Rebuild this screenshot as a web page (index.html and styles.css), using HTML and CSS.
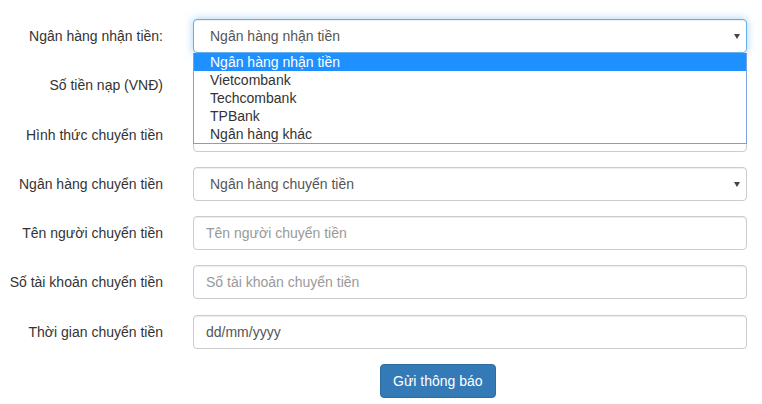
FILE: index.html
```html
<!DOCTYPE html>
<html lang="vi">
<head>
<meta charset="utf-8">
<title>Thông báo chuyển tiền</title>
<link rel="stylesheet" href="styles.css">
</head>
<body>
<form class="form">
  <div class="row">
    <label class="label">Ngân hàng nhận tiền:</label>
    <div class="control select-wrap open">
      <div class="field select focus">Ngân hàng nhận tiền</div>
      <ul class="dropdown">
        <li class="opt active">Ngân hàng nhận tiền</li>
        <li class="opt">Vietcombank</li>
        <li class="opt">Techcombank</li>
        <li class="opt">TPBank</li>
        <li class="opt">Ngân hàng khác</li>
      </ul>
    </div>
  </div>
  <div class="row">
    <label class="label">Số tiền nạp (VNĐ)</label>
    <div class="control"><input class="field" type="text"></div>
  </div>
  <div class="row">
    <label class="label">Hình thức chuyển tiền</label>
    <div class="control"><input class="field" type="text"></div>
  </div>
  <div class="row">
    <label class="label">Ngân hàng chuyển tiền</label>
    <div class="control select-wrap">
      <div class="field select">Ngân hàng chuyển tiền</div>
    </div>
  </div>
  <div class="row">
    <label class="label">Tên người chuyển tiền</label>
    <div class="control"><input class="field" type="text" placeholder="Tên người chuyển tiền"></div>
  </div>
  <div class="row">
    <label class="label">Số tài khoản chuyển tiền</label>
    <div class="control"><input class="field" type="text" placeholder="Số tài khoản chuyển tiền"></div>
  </div>
  <div class="row">
    <label class="label">Thời gian chuyển tiền</label>
    <div class="control"><input class="field date" type="text" value="dd/mm/yyyy"></div>
  </div>
  <div class="actions">
    <button class="btn" type="button">Gửi thông báo</button>
  </div>
</form>
</body>
</html>
```

FILE: styles.css
```css
* { box-sizing: border-box; }
body {
  margin: 0;
  background: #fff;
  font-family: "Liberation Sans", Arial, sans-serif;
  font-size: 14px;
  color: #333;
}
.form {
  display: flex;
  flex-direction: column;
  gap: 15.3px;
  padding-top: 19px;
}
.row {
  display: flex;
  align-items: center;
  height: 34px;
}
.label {
  width: 163px;
  text-align: right;
  color: #333;
  line-height: 20px;
}
.control {
  margin-left: 30px;
  width: 554px;
  height: 34px;
}
.field {
  display: block;
  width: 100%;
  height: 34px;
  padding: 6px 12px;
  font-family: inherit;
  font-size: 14px;
  line-height: 20px;
  color: #555;
  background: #fff;
  border: 1px solid #ccc;
  border-radius: 4px;
  box-shadow: inset 0 1px 1px rgba(0,0,0,.075);
  outline: none;
}
.field::placeholder { color: #999; }
.select {
  padding-left: 16px;
  position: relative;
}
.select-wrap { position: relative; }
.select-wrap::after {
  content: "";
  position: absolute;
  right: 7px;
  top: 15px;
  border-left: 3px solid transparent;
  border-right: 3px solid transparent;
  border-top: 5px solid #444;
}
.focus {
  border-color: #66afe9;
  box-shadow: inset 0 1px 1px rgba(0,0,0,.075), 0 0 8px rgba(102,175,233,.6);
}
.dropdown {
  position: absolute;
  left: 0;
  top: 34px;
  width: 554px;
  margin: 0;
  padding: 0;
  list-style: none;
  background: #fff;
  border: 1px solid #7a9ee0;
  border-top: none;
  z-index: 2;
}
.opt {
  height: 18px;
  line-height: 18px;
  padding-left: 16px;
  color: #333;
  font-size: 14px;
}
.opt.active {
  background: #1e90ff;
  color: #fff;
}
.date { color: #555; }
.actions {
  padding-left: 380px;
}
.btn {
  height: 34px;
  padding: 6px 12px;
  font-family: inherit;
  font-size: 14px;
  line-height: 20px;
  color: #fff;
  background: #337ab7;
  border: 1px solid #2e6da4;
  border-radius: 4px;
}
```
